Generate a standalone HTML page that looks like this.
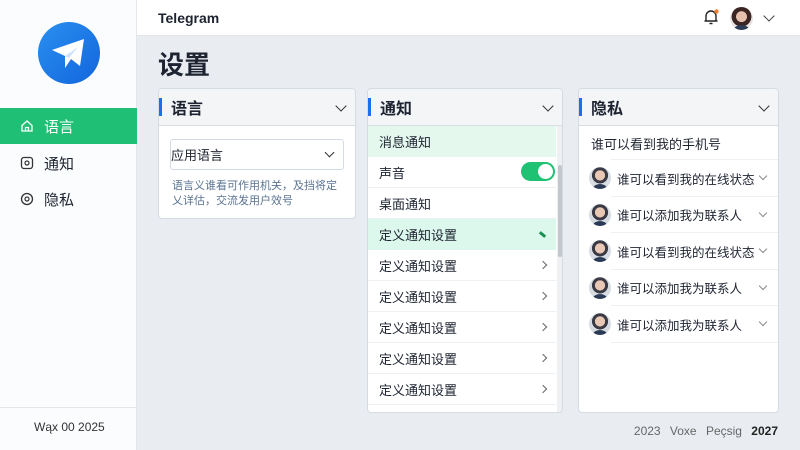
<!DOCTYPE html>
<html><head><meta charset="utf-8"><style>
*{margin:0;padding:0;box-sizing:border-box}
body{width:800px;height:450px;overflow:hidden;background:#e9edf2;font-family:"Liberation Sans","Noto Sans CJK SC",sans-serif;color:#1d2330;position:relative}
.abs{position:absolute}
.side{left:0;top:0;width:137px;height:450px;background:#fbfcfd;border-right:1px solid #e3e7ec}
.nav{left:0;width:137px;height:36px;display:flex;align-items:center;padding-left:20px;font-size:15px;gap:10px}
.top{left:137px;top:0;width:663px;height:36px;background:#fff;border-bottom:1px solid #e1e5ea}
.card{background:#fff;border:1px solid #d5dbe3;border-radius:4px;overflow:hidden}
.ch{height:37px;background:#f3f5f7;border-bottom:1px solid #d8dde4;display:flex;align-items:center;padding-left:12px;font-size:16px;font-weight:bold;position:relative}
.ch:before{content:"";position:absolute;left:0;top:9px;width:3px;height:18px;background:#1a6ef0}
.chev{position:absolute;right:10px;top:13px;width:8px;height:8px;border-right:1.6px solid #333;border-bottom:1.6px solid #333;transform:rotate(45deg)}
.row{height:31px;display:flex;align-items:center;padding-left:11px;font-size:13px;border-bottom:1px solid #edf0f3;position:relative;margin-right:6px}
.arr{position:absolute;right:10px;top:12px;width:6px;height:6px;border-right:1.3px solid #666;border-top:1.3px solid #666;transform:rotate(45deg)}
.prow{height:36.5px;display:flex;align-items:center;padding-left:10px;font-size:12.5px;position:relative}
.prow:after{content:"";position:absolute;left:32px;right:0;bottom:0;border-bottom:1px solid #edf0f3}
.av{width:22px;height:22px;border-radius:50%;background:radial-gradient(circle at 50% 38%,#e8c8b4 0 28%,#3a3a44 30% 45%,#d7dce3 47%);margin-right:6px;position:relative;overflow:hidden;flex:none}
.av:after{content:"";position:absolute;left:4px;right:4px;bottom:-4px;height:9px;border-radius:50%;background:#2b3a55}
.pch{position:absolute;right:12px;top:13px;width:6px;height:6px;border-right:1.2px solid #888;border-bottom:1.2px solid #888;transform:rotate(45deg)}
.pt{margin-right:22px}
</style></head><body>
<div class="abs side">
 <div class="abs" style="left:38px;top:22px;width:62px;height:62px;border-radius:50%;background:linear-gradient(135deg,#2b8ff0,#1166dd)">
  <svg width="62" height="62" viewBox="0 0 62 62"><path d="M14 28 L46 17 L42 44 L33 37 L27 46 L27 34 Z" fill="#fff"/><path d="M27 34 L40 25 L31 36" fill="#cfe2fb"/></svg>
 </div>
 <div class="abs nav" style="top:108px;background:#1fbf75;color:#fff">
  <svg width="14" height="14" viewBox="0 0 14 14"><path d="M2 6.5 L7 2 L12 6.5 V12 H2 Z M5.5 12 V8.5 H8.5 V12" fill="none" stroke="#fff" stroke-width="1.3"/></svg>语言</div>
 <div class="abs nav" style="top:145px"><svg width="14" height="14" viewBox="0 0 14 14"><rect x="1.5" y="1.5" width="11" height="11" rx="2.5" fill="none" stroke="#333" stroke-width="1.3"/><circle cx="7" cy="7" r="2" fill="none" stroke="#333" stroke-width="1.2"/></svg>通知</div>
 <div class="abs nav" style="top:181px"><svg width="14" height="14" viewBox="0 0 14 14"><circle cx="7" cy="7" r="5.5" fill="none" stroke="#333" stroke-width="1.3"/><circle cx="7" cy="7" r="2" fill="none" stroke="#333" stroke-width="1.2"/></svg>隐私</div>
 <div class="abs" style="left:0;top:407px;width:137px;border-top:1px solid #e3e7ec"></div>
 <div class="abs" style="left:34px;top:420px;font-size:12px;color:#333">Wąx 00 2025</div>
</div>
<div class="abs top">
 <div class="abs" style="left:21px;top:10px;font-size:14px;font-weight:bold;color:#1d2330">Telegram</div>
 <svg class="abs" style="left:565px;top:8px" width="18" height="18" viewBox="0 0 18 18"><path d="M4 13 V8 A5 5 0 0 1 14 8 V13 Z M2.5 13 H15.5 M7.5 15.5 H10.5" fill="none" stroke="#222" stroke-width="1.4"/><circle cx="14.5" cy="3.5" r="2.2" fill="#f08030"/></svg>
 <div class="abs av" style="left:593px;top:7px;width:23px;height:23px;background:radial-gradient(circle at 50% 42%,#e6c0ae 0 30%,#3a2522 32% 55%,#e9e4e2 57%)"></div>
 <div class="abs" style="left:628px;top:12px;width:8px;height:8px;border-right:1.5px solid #444;border-bottom:1.5px solid #444;transform:rotate(45deg)"></div>
</div>
<div class="abs" style="left:158px;top:45px;font-size:26px;font-weight:bold">设置</div>

<div class="abs card" style="left:158px;top:88px;width:198px;height:131px">
 <div class="ch">语言<div class="chev"></div></div>
 <div class="abs" style="left:11px;top:50px;width:174px;height:31px;border:1px solid #d5dbe3;border-radius:3px;font-size:13px;display:flex;align-items:center">应用语言<div class="chev" style="top:9px;width:7px;height:7px"></div></div>
 <div class="abs" style="left:13px;top:90px;width:168px;font-size:11px;line-height:15px;color:#5a7392">语言义谁看可作用机关，及挡将定乂详估，交流发用户效号</div>
</div>

<div class="abs card" style="left:367px;top:88px;width:196px;height:325px">
 <div class="ch">通知<div class="chev"></div></div>
 <div class="row" style="background:#e5f8ee;border:0">消息通知</div>
 <div class="row">声音<div class="abs" style="right:1px;top:5px;width:34px;height:19px;border-radius:10px;background:#1fc173"><div class="abs" style="right:2px;top:2px;width:15px;height:15px;border-radius:50%;background:#fff"></div></div></div>
 <div class="row">桌面通知</div>
 <div class="row" style="background:#dcf7eb;border:0">定义通知设置<div class="abs" style="right:10px;top:14px;width:7px;height:3px;background:#15924f;transform:rotate(40deg)"></div></div>
 <div class="row">定义通知设置<div class="arr"></div></div>
 <div class="row">定义通知设置<div class="arr"></div></div>
 <div class="row">定义通知设置<div class="arr"></div></div>
 <div class="row">定义通知设置<div class="arr"></div></div>
 <div class="row">定义通知设置<div class="arr"></div></div>
 <div class="abs" style="right:0;top:37px;width:5px;height:288px;background:#eef0f2"></div>
 <div class="abs" style="right:0;top:76px;width:4px;height:92px;border-radius:2px;background:#c3c7cc"></div>
</div>

<div class="abs card" style="left:578px;top:88px;width:201px;height:325px">
 <div class="ch">隐私<div class="chev"></div></div>
 <div class="prow" style="height:34px;padding-left:12px;font-size:13px">谁可以看到我的手机号</div>
 <div class="prow"><div class="av"></div><span class="pt">谁可以看到我的在线状态</span><div class="pch"></div></div>
 <div class="prow"><div class="av"></div><span class="pt">谁可以添加我为联系人</span><div class="pch"></div></div>
 <div class="prow"><div class="av"></div><span class="pt">谁可以看到我的在线状态</span><div class="pch"></div></div>
 <div class="prow"><div class="av"></div><span class="pt">谁可以添加我为联系人</span><div class="pch"></div></div>
 <div class="prow"><div class="av"></div><span class="pt">谁可以添加我为联系人</span><div class="pch"></div></div>
</div>

<div class="abs" style="right:22px;top:424px;font-size:12px;color:#666;word-spacing:6px">2023 Voxe Peçsig <b style="color:#222">2027</b></div>
</body></html>
